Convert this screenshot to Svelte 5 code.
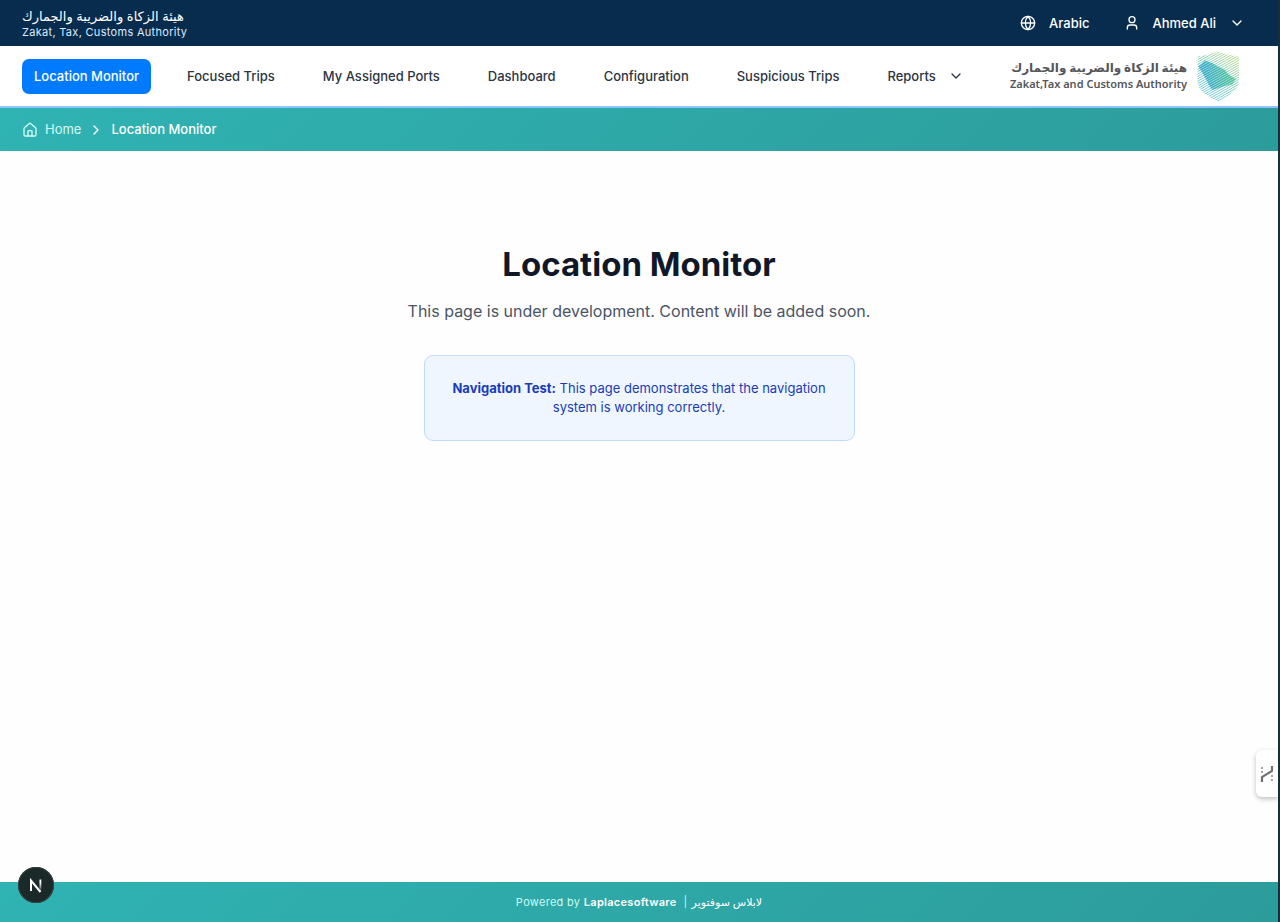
<script>
  const links = [
    'Location Monitor',
    'Focused Trips',
    'My Assigned Ports',
    'Dashboard',
    'Configuration',
    'Suspicious Trips',
  ];
  const current = 'Location Monitor';
  const stripes = Array.from({ length: 32 }, (_, i) => i * 2.4);
</script>

{#snippet chevron(d)}
  <svg class="icon" viewBox="0 0 24 24" aria-hidden="true"><path {d} /></svg>
{/snippet}

<div class="page">
  <header class="topbar">
    <div class="authority">
      <span class="authority-ar" lang="ar" dir="rtl">هيئة الزكاة والضريبة والجمارك</span>
      <span class="authority-en">Zakat, Tax, Customs Authority</span>
    </div>
    <div class="account">
      <button type="button">
        <svg class="icon" viewBox="0 0 24 24" aria-hidden="true">
          <circle cx="12" cy="12" r="10" />
          <path d="M12 2a14.5 14.5 0 0 0 0 20 14.5 14.5 0 0 0 0-20M2 12h20" />
        </svg>
        <span>Arabic</span>
      </button>
      <button type="button">
        <svg class="icon" viewBox="0 0 24 24" aria-hidden="true">
          <path d="M19 21v-2a4 4 0 0 0-4-4H9a4 4 0 0 0-4 4v2" />
          <circle cx="12" cy="7" r="4.5" />
        </svg>
        <span>Ahmed Ali</span>
        {@render chevron('m6 9 6 6 6-6')}
      </button>
    </div>
  </header>

  <div class="navbar">
    <nav aria-label="Main">
      {#each links as link}
        <a href="#top" class:active={link === current}>{link}</a>
      {/each}
      <button type="button">
        <span>Reports</span>
        {@render chevron('m6 9 6 6 6-6')}
      </button>
    </nav>
    <div class="brand">
      <div class="brand-text">
        <span class="brand-ar" lang="ar" dir="rtl">هيئة الزكاة والضريبة والجمارك</span>
        <span class="brand-en">Zakat,Tax and Customs Authority</span>
      </div>
      <svg class="shield" viewBox="0 0 42 51" aria-hidden="true">
        <defs>
          <linearGradient id="tint" gradientUnits="userSpaceOnUse" x1="4" y1="42" x2="34" y2="4">
            <stop offset="0" stop-color="#4fb9de" />
            <stop offset="0.5" stop-color="#5cc5b2" />
            <stop offset="1" stop-color="#a2d076" />
          </linearGradient>
          <linearGradient id="core" gradientUnits="userSpaceOnUse" x1="8" y1="30" x2="36" y2="26">
            <stop offset="0" stop-color="#35aacb" />
            <stop offset="1" stop-color="#4dc096" />
          </linearGradient>
          <clipPath id="outline">
            <path d="M0.5 5.5Q12 4 21 0Q30 4 42 5.5V30C42 39 31 45 21 50.5C11 45 0.5 40 0.5 30Z" />
          </clipPath>
          <clipPath id="plate">
            <path d="M1.5 15.5 8 9.5Q14 11 20 15L28 19Q32 25 39 28L35 33.5Q28 34 22 37L15.5 39Q11 34 9 28Q5 21 1.5 15.5Z" />
          </clipPath>
        </defs>
        <g clip-path="url(#outline)" stroke="url(#tint)" stroke-width="0.8">
          {#each stripes as y}
            <path d="M-1 {y}L43 {y - 25}" />
          {/each}
        </g>
        <g clip-path="url(#plate)">
          <rect width="42" height="51" fill="url(#core)" opacity="0.45" />
          <g stroke="url(#core)" stroke-width="1.2">
            {#each stripes as y}
              <path d="M-1 {y}L43 {y - 25}" />
            {/each}
          </g>
        </g>
      </svg>
    </div>
  </div>

  <nav class="crumbs" aria-label="Breadcrumb">
    <a href="#top">
      <svg class="icon" viewBox="0 0 24 24" aria-hidden="true">
        <path d="M15 21v-7a1 1 0 0 0-1-1h-4a1 1 0 0 0-1 1v7" />
        <path d="M3 10a2 2 0 0 1 .7-1.5l7-6a2 2 0 0 1 2.6 0l7 6A2 2 0 0 1 21 10v9a2 2 0 0 1-2 2H5a2 2 0 0 1-2-2z" />
      </svg>
      <span>Home</span>
    </a>
    {@render chevron('m9 18 6-6-6-6')}
    <span class="here" aria-current="page">Location Monitor</span>
  </nav>

  <main>
    <h1>Location Monitor</h1>
    <p class="lead">This page is under development. Content will be added soon.</p>
    <p class="note">
      <strong>Navigation Test:</strong> This page demonstrates that the navigation system is working correctly.
    </p>
  </main>

  <footer>
    <span>Powered by <strong>Laplacesoftware</strong></span>
    <span class="bar">|</span>
    <span class="maker-ar" lang="ar" dir="rtl">لابلاس سوفتوير</span>
  </footer>

  <button type="button" class="dev" aria-label="N">
    <svg viewBox="0 0 36 36" aria-hidden="true">
      <defs>
        <linearGradient id="fade" x1="0" y1="0" x2="0" y2="1">
          <stop offset="0.3" stop-color="#fff" />
          <stop offset="1" stop-color="#fff" stop-opacity="0.1" />
        </linearGradient>
      </defs>
      <path d="M13 24V13.5L22.5 25" fill="none" stroke="#fff" stroke-width="2" />
      <rect x="21.5" y="12.5" width="1.8" height="11" fill="url(#fade)" />
    </svg>
  </button>

  <button type="button" class="side" aria-label="Open panel">
    <svg viewBox="0 0 14 18" fill="none" stroke="#707070" aria-hidden="true">
      <path d="M2 17V12L12 6V1" stroke-width="2.2" />
      <path d="M2 2v7M12 10v7" stroke-width="1.8" stroke-dasharray="2 2" opacity="0.7" />
    </svg>
  </button>
</div>

<style>
  :global(body) {
    margin: 0;
    background: #fefefe;
  }
  .page {
    position: relative;
    display: flex;
    flex-direction: column;
    min-height: 100vh;
    box-sizing: border-box;
    border-right: 2px solid #153038;
    font-family: Inter, "DejaVu Sans", sans-serif;
    font-size: 13px;
    line-height: 19px;
    color: #2b3544;
  }
  button {
    padding: 0;
    border: 0;
    background: none;
    font: inherit;
    color: inherit;
    cursor: pointer;
  }
  a {
    color: inherit;
    text-decoration: none;
  }
  .icon {
    width: 16px;
    height: 16px;
    flex: none;
    fill: none;
    stroke: currentColor;
    stroke-width: 2;
    stroke-linecap: round;
    stroke-linejoin: round;
  }
  .topbar {
    display: flex;
    align-items: center;
    justify-content: space-between;
    height: 46px;
    padding: 0 33px 0 22px;
    background: #082c4e;
    color: #fff;
  }
  .authority {
    display: flex;
    flex-direction: column;
    align-items: flex-start;
    padding-top: 2px;
  }
  .authority-ar {
    font-size: 13px;
    line-height: 16px;
  }
  .authority-en {
    font-size: 11px;
    line-height: 16px;
    color: #dbeafe;
    letter-spacing: 0.3px;
  }
  .account {
    display: flex;
    gap: 34px;
    font-weight: 500;
  }
  .account button {
    display: flex;
    align-items: center;
    gap: 13px;
  }
  .navbar {
    display: flex;
    align-items: center;
    justify-content: space-between;
    height: 60px;
    padding: 0 39px 0 22px;
    border-bottom: 2px solid #8ec5ff;
    background: #fff;
  }
  .navbar nav {
    display: flex;
    align-items: center;
    gap: 24px;
    font-weight: 500;
    white-space: nowrap;
  }
  .navbar nav a,
  .navbar nav button {
    display: flex;
    align-items: center;
    gap: 12px;
    padding: 8px 12px;
    border-radius: 7px;
  }
  .navbar nav .active {
    background: #007bff;
    color: #fff;
  }
  .brand {
    display: flex;
    align-items: center;
    gap: 10px;
    color: #54565a;
    white-space: nowrap;
  }
  .brand-text {
    display: flex;
    flex-direction: column;
    align-items: flex-end;
    font-weight: 700;
  }
  .brand-ar {
    font-size: 12px;
    line-height: 16px;
  }
  .brand-en {
    font-family: "Noto Sans", sans-serif;
    font-size: 11px;
    font-weight: 600;
    line-height: 16px;
  }
  .shield {
    width: 42px;
    height: 51px;
  }
  .crumbs,
  footer {
    background: linear-gradient(135deg, #30b3b3, #2c9c9b);
  }
  .crumbs {
    display: flex;
    align-items: center;
    gap: 7px;
    height: 43px;
    padding: 0 22px;
    color: #fff;
  }
  .crumbs a {
    display: flex;
    align-items: center;
    gap: 7px;
    color: #d5fbf5;
  }
  .here {
    font-weight: 500;
  }
  main {
    flex: 1;
    display: flex;
    flex-direction: column;
    align-items: center;
    padding: 93px 24px 24px;
    text-align: center;
  }
  h1 {
    margin: 0 0 14px;
    font-size: 33px;
    font-weight: 700;
    line-height: 40px;
    color: #101828;
  }
  .lead {
    margin: 0 0 31px;
    font-size: 16px;
    line-height: 26px;
    color: #4a5565;
  }
  .note {
    box-sizing: border-box;
    width: 100%;
    max-width: 431px;
    margin: 0;
    padding: 23px;
    border: 1px solid #bedbff;
    border-radius: 9px;
    background: #eff6ff;
    color: #193cb8;
  }
  footer {
    display: flex;
    align-items: center;
    justify-content: center;
    gap: 4px;
    height: 40px;
    font-size: 11px;
    color: #cbfbf1;
    letter-spacing: 0.3px;
  }
  footer strong {
    font-weight: 600;
    color: #fff;
  }
  .maker-ar {
    font-weight: 500;
    color: #fff;
  }
  .bar {
    padding-left: 3px;
  }
  .dev {
    position: fixed;
    left: 18px;
    bottom: 19px;
    width: 36px;
    height: 36px;
    border-radius: 50%;
    background: #1b2929;
    box-shadow: inset 0 0 0 1px #354242;
  }
  .dev svg {
    display: block;
  }
  .side {
    position: fixed;
    right: 2px;
    bottom: 125px;
    display: grid;
    place-items: center;
    width: 22px;
    height: 47px;
    border-radius: 6px 0 0 6px;
    background: #fff;
    box-shadow: 0 2px 5px rgb(0 0 0 / 25%);
    clip-path: inset(-8px 0 -8px -8px);
  }
  .side svg {
    width: 14px;
    height: 18px;
  }
</style>
